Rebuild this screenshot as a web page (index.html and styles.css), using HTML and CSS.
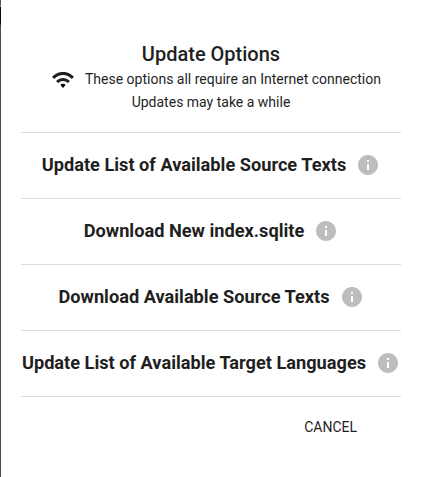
FILE: index.html
```html
<!DOCTYPE html>
<html lang="en">
<head>
<meta charset="utf-8">
<title>Update Options</title>
<link rel="stylesheet" href="styles.css">
</head>
<body>
<svg class="defs" width="0" height="0" aria-hidden="true">
  <symbol id="info" viewBox="0 0 24 24"><path d="M12 2C6.48 2 2 6.48 2 12s4.48 10 10 10 10-4.48 10-10S17.52 2 12 2zm1 15h-2v-6h2v6zm0-8h-2V7h2v2z"/></symbol>
</svg>
<main class="dialog">
  <header class="header">
    <h1 class="title">Update Options</h1>
    <p class="notice">
      <svg class="wifi" viewBox="0 0 22 16"><path class="arc" d="M1.1 5.9C7-.1 15-.1 20.9 5.9M5 10c3.5-3.2 8.5-3.2 12 0"/><path d="M8.5 12.9c1.2-1.4 3.8-1.4 5 0L11.5 15.5q-.5.5-1 0z"/></svg>
      <span class="notice-text">These options all require an Internet connection</span>
    </p>
    <p class="subtitle">Updates may take a while</p>
  </header>
  <div class="option"><span>Update List of Available Source Texts</span><svg class="info"><use href="#info"/></svg></div>
  <div class="option"><span>Download New index.sqlite</span><svg class="info"><use href="#info"/></svg></div>
  <div class="option"><span>Download Available Source Texts</span><svg class="info"><use href="#info"/></svg></div>
  <div class="option"><span>Update List of Available Target Languages</span><svg class="info"><use href="#info"/></svg></div>
  <footer class="footer"><button class="cancel">CANCEL</button></footer>
</main>
</body>
</html>
```
FILE: styles.css
```css
* { box-sizing: border-box; }
body {
  margin: 0;
  background: #fff;
  color: #1f1f1f;
  font-family: Roboto, sans-serif;
  overflow: hidden;
}
.defs { position: absolute; }
.dialog {
  height: 477px;
  padding: 42px 20px 0;
  border-left: 1px solid;
  border-image: linear-gradient(#555 0 6px, #888 6px 8px, #1c0508 8px 25px, #30344a 25px 27px, #4b4b4d 27px) 1;
}
.header { height: 91px; border-bottom: 1px solid #dcdcdc; text-align: center; }
.title { margin: 0; font-size: 20px; line-height: 24px; font-weight: 500; }
.notice {
  display: flex;
  align-items: center;
  margin: 0;
  padding: 1px 0 1px 31px;
  height: 25px;
  font-size: 14px;
  line-height: 17px;
  white-space: nowrap;
}
.notice-text { padding-top: 2px; }
.wifi { width: 22px; height: 16px; margin: 3px 11px 0 0; }
.arc { fill: none; stroke: #1f1f1f; stroke-width: 3; }
.subtitle { margin: 0; font-size: 14px; line-height: 23px; }
.option {
  display: flex;
  align-items: center;
  justify-content: center;
  height: 66px;
  padding-bottom: 2px;
  border-bottom: 1px solid #dcdcdc;
  font-size: 18.2px;
  font-weight: 700;
  white-space: nowrap;
}
.info { width: 24px; height: 24px; margin-left: 10px; fill: #bdbdbd; flex: none; }
.footer { display: flex; justify-content: flex-end; padding: 12px 28px 0 0; }
.cancel {
  height: 36px;
  padding: 0 16px;
  border: 0;
  background: none;
  color: #1f1f1f;
  font: 400 14px Roboto, sans-serif;
}
```
